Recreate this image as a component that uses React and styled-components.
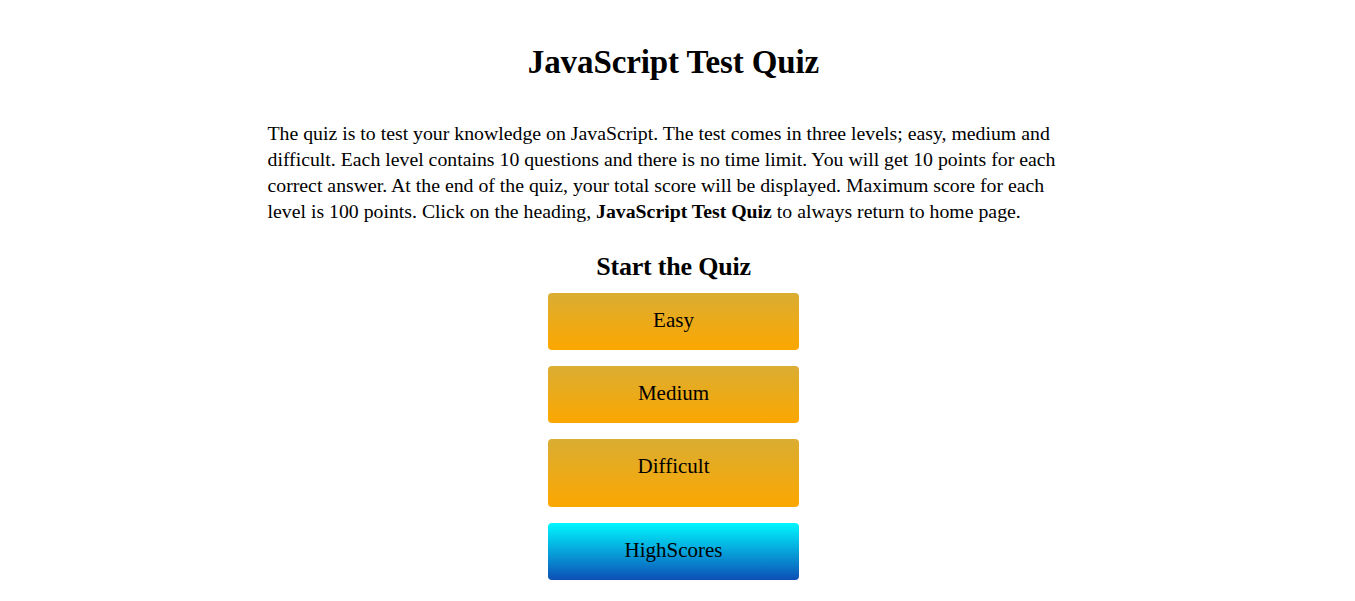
import React from "react";
import styled, { createGlobalStyle } from "styled-components";

const Global = createGlobalStyle`
  html, body { margin: 0; padding: 0; background: #fff; }
  body { padding-right: 8px; font-family: "Liberation Serif", "DejaVu Serif", serif; color: #000; }
`;

const Page = styled.main`
  width: 820px;
  margin: 0 auto;
  display: flex;
  flex-direction: column;
  align-items: center;
`;

const Title = styled.h1`
  margin: 40px 0 0;
  font-size: 33px;
  line-height: 44px;
  font-weight: 700;
  letter-spacing: -0.1px;
  cursor: pointer;
`;

const Intro = styled.p`
  margin: 36px 0 0;
  align-self: stretch;
  padding-left: 4px;
  font-size: 19.8px;
  line-height: 26px;
`;

const SubTitle = styled.h2`
  margin: 26px 0 0;
  font-size: 26px;
  line-height: 34px;
  font-weight: 700;
  letter-spacing: -0.2px;
`;

const Buttons = styled.div`
  margin-top: 9px;
  display: flex;
  flex-direction: column;
  gap: 16px;
`;

const LevelButton = styled.button`
  width: 251px;
  height: ${(p) => p.$h}px;
  padding: 16px 0 0;
  display: flex;
  justify-content: center;
  align-items: flex-start;
  border: none;
  border-radius: 4px;
  font-family: inherit;
  font-size: 21px;
  line-height: 22px;
  color: #000;
  cursor: pointer;
  background: ${(p) =>
    p.$variant === "score"
      ? "linear-gradient(#00f7ff, #0d4fb6)"
      : "linear-gradient(#daad33, #fca700)"};
`;

export default function App() {
  return (
    <>
      <Global />
      <Page>
        <Title>JavaScript Test Quiz</Title>
        <Intro>
          The quiz is to test your knowledge on JavaScript. The test comes in three levels; easy, medium and
          difficult. Each level contains 10 questions and there is no time limit. You will get 10 points for each
          correct answer. At the end of the quiz, your total score will be displayed. Maximum score for each
          level is 100 points. Click on the heading, <strong>JavaScript Test Quiz</strong> to always return to home page.
        </Intro>
        <SubTitle>Start the Quiz</SubTitle>
        <Buttons>
          <LevelButton $h={57}>Easy</LevelButton>
          <LevelButton $h={57}>Medium</LevelButton>
          <LevelButton $h={68}>Difficult</LevelButton>
          <LevelButton $h={57} $variant="score">HighScores</LevelButton>
        </Buttons>
      </Page>
    </>
  );
}
